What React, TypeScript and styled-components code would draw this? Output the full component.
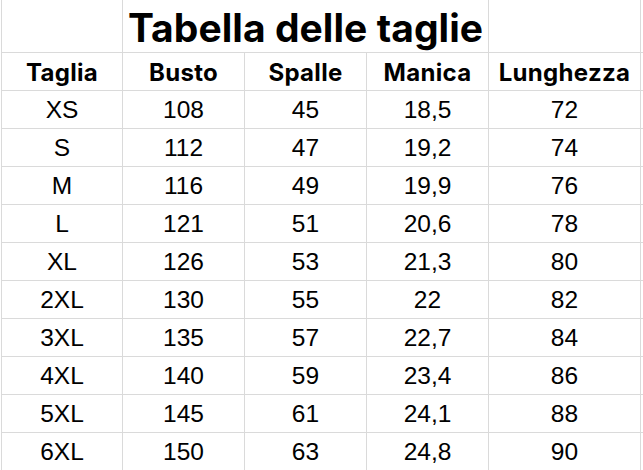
import React from "react";
import styled, { createGlobalStyle } from "styled-components";

const GlobalStyle = createGlobalStyle`
  html, body {
    margin: 0;
    padding: 0;
    background: #ffffff;
  }
  body {
    width: 643px;
    height: 470px;
    overflow: hidden;
  }
`;

const GRID = "#dadada";

const Sheet = styled.div`
  display: grid;
  grid-template-columns: 121px 122px 122px 122px 152px 2px;
  grid-auto-rows: 38px;
  grid-template-rows: 53px;
  margin-left: 1px;
  border-left: 1px solid ${GRID};
  width: max-content;
`;

const Cell = styled.div<{ $span?: number; $variant?: "title" | "head" | "data" }>`
  box-sizing: border-box;
  grid-column: span ${(p) => p.$span ?? 1};
  border-right: 1px solid ${GRID};
  border-bottom: 1px solid ${GRID};
  display: flex;
  align-items: center;
  justify-content: center;
  color: #000;
  white-space: nowrap;
  font-family: ${(p) =>
    p.$variant === "data"
      ? `"Liberation Sans", Arial, sans-serif`
      : `Inter, "Noto Sans", sans-serif`};
  font-weight: ${(p) => (p.$variant === "data" ? 400 : 700)};
  font-size: ${(p) =>
    p.$variant === "title" ? "39px" : p.$variant === "head" ? "24px" : "24.5px"};
  letter-spacing: ${(p) =>
    p.$variant === "head" ? "0.3px" : p.$variant === "title" ? "0.05px" : "0"};
  padding-top: ${(p) => (p.$variant === "title" ? "2px" : "1px")};
`;

const Edge = styled.div`
  border-bottom: 1px solid ${GRID};
  box-sizing: border-box;
`;

const headers = ["Taglia", "Busto", "Spalle", "Manica", "Lunghezza"];

const rows: string[][] = [
  ["XS", "108", "45", "18,5", "72"],
  ["S", "112", "47", "19,2", "74"],
  ["M", "116", "49", "19,9", "76"],
  ["L", "121", "51", "20,6", "78"],
  ["XL", "126", "53", "21,3", "80"],
  ["2XL", "130", "55", "22", "82"],
  ["3XL", "135", "57", "22,7", "84"],
  ["4XL", "140", "59", "23,4", "86"],
  ["5XL", "145", "61", "24,1", "88"],
  ["6XL", "150", "63", "24,8", "90"],
];

export default function App() {
  return (
    <>
      <GlobalStyle />
      <Sheet>
        <Cell $variant="title" />
        <Cell $variant="title" $span={3}>
          Tabella delle taglie
        </Cell>
        <Cell $variant="title" />
        <Edge />
        {headers.map((h) => (
          <Cell key={h} $variant="head">
            {h}
          </Cell>
        ))}
        <Edge />
        {rows.map((r) => (
          <React.Fragment key={r[0]}>
            {r.map((v, i) => (
              <Cell key={i} $variant="data">
                {v}
              </Cell>
            ))}
            <Edge />
          </React.Fragment>
        ))}
      </Sheet>
    </>
  );
}
